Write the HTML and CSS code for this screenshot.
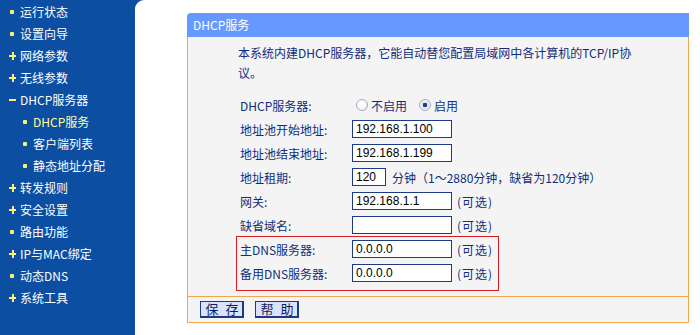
FILE: index.html
```html
<!DOCTYPE html>
<html lang="zh-CN">
<head>
    <meta charset="UTF-8">
    <title>DHCP服务</title>
    <link rel="stylesheet" href="styles.css">
</head>
<body>
    <div class="layout">
        <!-- Left menu -->
        <ul class="menu">
            <li><span class="ico dot"></span>运行状态</li>
            <li><span class="ico dot"></span>设置向导</li>
            <li><span class="ico plus"></span>网络参数</li>
            <li><span class="ico plus"></span>无线参数</li>
            <li><span class="ico minus"></span>DHCP服务器</li>
            <li class="sub active"><span class="ico dot"></span>DHCP服务</li>
            <li class="sub"><span class="ico dot"></span>客户端列表</li>
            <li class="sub"><span class="ico dot"></span>静态地址分配</li>
            <li><span class="ico plus"></span>转发规则</li>
            <li><span class="ico plus"></span>安全设置</li>
            <li><span class="ico dot"></span>路由功能</li>
            <li><span class="ico plus"></span>IP与MAC绑定</li>
            <li><span class="ico dot"></span>动态DNS</li>
            <li><span class="ico plus"></span>系统工具</li>
        </ul>

        <!-- Main content -->
        <div class="main">
            <div class="panel">
                <div class="panel-title">DHCP服务</div>
                <div class="panel-body">
                    <p class="intro">本系统内建DHCP服务器，它能自动替您配置局域网中各计算机的TCP/IP协<br>议。</p>

                    <div class="form">
                        <div class="row">
                            <label>DHCP服务器:</label>
                            <div class="field">
                                <input type="radio" name="dhcp" class="radio" id="off"><span class="opt">不启用</span>
                                <input type="radio" name="dhcp" class="radio on" id="on" checked><span class="opt">启用</span>
                            </div>
                        </div>
                        <div class="row">
                            <label>地址池开始地址:</label>
                            <div class="field"><input type="text" class="text" value="192.168.1.100"></div>
                        </div>
                        <div class="row">
                            <label>地址池结束地址:</label>
                            <div class="field"><input type="text" class="text" value="192.168.1.199"></div>
                        </div>
                        <div class="row">
                            <label>地址租期:</label>
                            <div class="field"><input type="text" class="text short" value="120"><span class="note">分钟（1～2880分钟，缺省为120分钟）</span></div>
                        </div>
                        <div class="row">
                            <label>网关:</label>
                            <div class="field"><input type="text" class="text" value="192.168.1.1"><span class="note">(可选)</span></div>
                        </div>
                        <div class="row">
                            <label>缺省域名:</label>
                            <div class="field"><input type="text" class="text" value=""><span class="note">(可选)</span></div>
                        </div>
                        <div class="highlight">
                            <div class="row">
                                <label>主DNS服务器:</label>
                                <div class="field"><input type="text" class="text" value="0.0.0.0"><span class="note">(可选)</span></div>
                            </div>
                            <div class="row">
                                <label>备用DNS服务器:</label>
                                <div class="field"><input type="text" class="text" value="0.0.0.0"><span class="note">(可选)</span></div>
                            </div>
                        </div>
                    </div>
                </div>
                <div class="panel-foot">
                    <button class="btn">保 存</button>
                    <button class="btn">帮 助</button>
                </div>
            </div>
        </div>
    </div>
</body>
</html>
```

FILE: styles.css
```css
* {
    margin: 0;
    padding: 0;
    box-sizing: border-box;
}

body {
    background: #fff;
    font-family: "Noto Sans CJK SC", "Liberation Sans", sans-serif;
    font-size: 12px;
}

.layout {
    display: flex;
    min-height: 100vh;
    background: #0b4ea2;
}

/* Menu */
.menu {
    list-style: none;
    width: 135px;
    color: #fff;
}

.menu li {
    display: flex;
    align-items: center;
    height: 22px;
    padding-left: 9px;
    white-space: nowrap;
}

.menu li.sub {
    padding-left: 22px;
}

.menu li.active {
    color: #ffff99;
}

.ico {
    position: relative;
    display: inline-block;
    width: 7px;
    height: 7px;
    margin-right: 4px;
}

.ico.dot::before {
    content: "";
    position: absolute;
    left: 1px;
    top: 2px;
    width: 4px;
    height: 4px;
    border-radius: 1px;
    background: #fff27a;
}

.ico.plus::before,
.ico.plus::after,
.ico.minus::before {
    content: "";
    position: absolute;
    background: #fff27a;
}

.ico.plus::before,
.ico.minus::before {
    left: 0;
    top: 3px;
    width: 7px;
    height: 2px;
}

.ico.plus::after {
    left: 2.5px;
    top: 0;
    width: 2px;
    height: 8px;
}

/* Main area */
.main {
    flex: 1;
    background: #fff;
    border-top-left-radius: 9px;
    padding: 13px 11px 0 52px;
}

.panel {
    width: 502px;
}

.panel-title {
    height: 24px;
    line-height: 24px;
    padding-left: 6px;
    background: #6699ff;
    color: #fff;
    border-top-left-radius: 4px;
}

.panel-body {
    background: #f4f4f4;
    border-left: 1px solid #f3a64a;
    border-right: 1px solid #f3a64a;
    padding: 6px 0 5px 50px;
    color: #112d7a;
}

.intro {
    line-height: 20px;
    margin-bottom: 10px;
}

.form {
    padding-left: 2px;
}

.row {
    display: flex;
    align-items: center;
    height: 24px;
}

.row label {
    flex-shrink: 0;
    width: 112px;
}

.field {
    display: flex;
    align-items: center;
    white-space: nowrap;
}

.text {
    width: 100px;
    height: 18px;
    border: 1px solid #1d3a85;
    background: #fff;
    padding: 0 3px;
    font-family: "Liberation Sans", sans-serif;
    font-size: 12px;
    color: #000;
    outline: none;
}

.text.short {
    width: 34px;
}

.note {
    margin-left: 5px;
    letter-spacing: 1px;
}

.text.short + .note {
    margin-left: 6px;
    letter-spacing: 0;
}

.radio {
    appearance: none;
    width: 12px;
    height: 12px;
    margin: 0 3px 0 4px;
    border: 1px solid #a7acb9;
    border-radius: 50%;
    background: radial-gradient(circle at 40% 40%, #fff 30%, #e1e4ea 100%);
}

.radio.on {
    margin-left: 12px;
    background: radial-gradient(circle, #1b3f8f 0 2px, #dde3f0 2.5px, #fff 100%);
}

.highlight {
    margin: -1px 0 0 -4px;
    padding: 0 0 5px 3px;
    width: 263px;
    border: 1px solid #d81e1e;
}

.panel-foot {
    display: flex;
    align-items: center;
    gap: 11px;
    height: 27px;
    padding-left: 12px;
    background: #f4f4f4;
    border: 1px solid #f3a64a;
}

.btn {
    width: 44px;
    height: 17px;
    padding: 0 0 0 3px;
    background: #dde2fc;
    border: 1px solid #1d3a85;
    border-right-width: 2px;
    border-bottom-width: 2px;
    font-family: "Noto Sans CJK SC", sans-serif;
    font-size: 13px;
    line-height: 14px;
    color: #0c1f5c;
    letter-spacing: 2px;
}
```
